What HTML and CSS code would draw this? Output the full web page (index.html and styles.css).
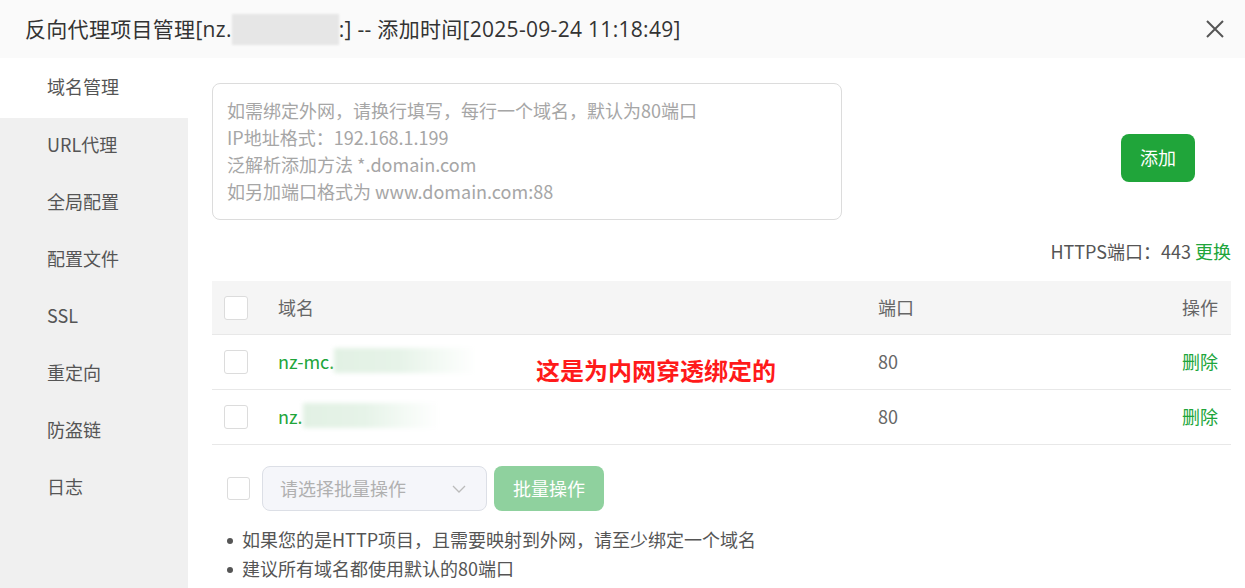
FILE: index.html
```html
<!DOCTYPE html>
<html lang="zh">
<head>
<meta charset="utf-8">
<title>反向代理项目管理</title>
<link rel="stylesheet" href="styles.css">
</head>
<body>
<div class="dialog">
  <div class="header">
    <div class="title">反向代理项目管理[nz.<span class="blur-gray"></span>:] -- 添加时间[2025-09-24 11:18:49]</div>
    <svg class="close" width="20" height="20" viewBox="0 0 20 20"><path d="M2 2 L18 18 M18 2 L2 18" stroke="#555" stroke-width="2" fill="none"/></svg>
  </div>
  <div class="body">
    <div class="sidebar">
      <div class="nav-item active">域名管理</div>
      <div class="nav-item">URL代理</div>
      <div class="nav-item">全局配置</div>
      <div class="nav-item">配置文件</div>
      <div class="nav-item">SSL</div>
      <div class="nav-item">重定向</div>
      <div class="nav-item">防盗链</div>
      <div class="nav-item">日志</div>
    </div>
    <div class="main">
      <div class="top-row">
        <div class="textarea">
          <div>如需绑定外网，请换行填写，每行一个域名，默认为80端口</div>
          <div>IP地址格式：192.168.1.199</div>
          <div>泛解析添加方法 *.domain.com</div>
          <div>如另加端口格式为 www.domain.com:88</div>
        </div>
        <div class="btn-add">添加</div>
      </div>
      <div class="https-row">HTTPS端口：443 <span class="link">更换</span></div>
      <div class="table">
        <div class="tr thead">
          <div class="cell"><span class="checkbox"></span></div>
          <div class="cell">域名</div>
          <div class="cell">端口</div>
          <div class="cell right">操作</div>
        </div>
        <div class="tr">
          <div class="cell"><span class="checkbox"></span></div>
          <div class="cell green">nz-mc.<span class="blur-green w143"></span></div>
          <div class="cell">80</div>
          <div class="cell right green">删除</div>
          <div class="annotation">这是为内网穿透绑定的</div>
        </div>
        <div class="tr">
          <div class="cell"><span class="checkbox"></span></div>
          <div class="cell green">nz.<span class="blur-green w137"></span></div>
          <div class="cell">80</div>
          <div class="cell right green">删除</div>
        </div>
      </div>
      <div class="bulk-row">
        <span class="checkbox"></span>
        <div class="select">
          <span>请选择批量操作</span>
          <svg width="14" height="8" viewBox="0 0 14 8"><path d="M1 1 L7 7 L13 1" stroke="#bbb" stroke-width="1.3" fill="none"/></svg>
        </div>
        <div class="btn-bulk">批量操作</div>
      </div>
      <ul class="tips">
        <li>如果您的是HTTP项目，且需要映射到外网，请至少绑定一个域名</li>
        <li>建议所有域名都使用默认的80端口</li>
      </ul>
    </div>
  </div>
</div>
</body>
</html>
```
FILE: styles.css
```css
* { box-sizing: border-box; }
html, body {
  margin: 0;
  padding: 0;
  background: #fff;
}
body {
  width: 1245px;
  height: 588px;
  overflow: hidden;
  font-family: "Noto Sans CJK SC", "Noto Sans", sans-serif;
  color: #555;
}
.dialog {
  width: 1245px;
  height: 588px;
  display: flex;
  flex-direction: column;
}
.header {
  height: 58px;
  flex: none;
  background: #fafafa;
  display: flex;
  align-items: center;
  justify-content: space-between;
  padding: 0 20px 0 25px;
}
.title {
  font-family: "Open Sans", "Noto Sans CJK SC", sans-serif;
  font-size: 21px;
  letter-spacing: 0.3px;
  color: #333;
  display: flex;
  align-items: center;
  white-space: nowrap;
  padding-bottom: 2px;
}
.blur-gray {
  display: inline-block;
  width: 107px;
  height: 31px;
  background: #e6e6e6;
  filter: blur(1px);
  margin-top: 2px;
}
.close { display: block; }
.body {
  flex: 1;
  display: flex;
}
.sidebar {
  width: 188px;
  flex: none;
  background: #f0f0f0;
}
.nav-item {
  height: 57px;
  padding-left: 47px;
  padding-bottom: 5px;
  display: flex;
  align-items: center;
  font-size: 18px;
  color: #555;
}
.nav-item.active {
  background: #fff;
  height: 60px;
  padding-bottom: 4px;
}
.main {
  flex: 1;
  padding: 25px 14px 0 24px;
}
.top-row {
  display: flex;
  justify-content: space-between;
  align-items: flex-start;
  padding-right: 36px;
}
.textarea {
  width: 630px;
  height: 137px;
  border: 1px solid #dcdcdc;
  border-radius: 8px;
  padding: 13px 14px;
  font-size: 18px;
  line-height: 27px;
  color: #a6a6a6;
}
.btn-add {
  margin-top: 51px;
  width: 74px;
  height: 48px;
  background: #20a53a;
  color: #fff;
  border-radius: 8px;
  font-size: 18px;
  display: flex;
  align-items: center;
  justify-content: center;
  padding-bottom: 2px;
}
.https-row {
  margin-top: 17px;
  height: 28px;
  line-height: 28px;
  text-align: right;
  font-size: 18px;
  color: #555;
  margin-bottom: 1px;
}
.link { color: #20a53a; }
.table {
  margin-top: 16px;
}
.tr {
  position: relative;
  display: grid;
  grid-template-columns: 54px 600px 1fr auto;
  align-items: center;
  height: 55px;
  padding: 0 13px 0 12px;
  border-bottom: 1px solid #e8e8e8;
  font-size: 18px;
  color: #666;
}
.thead {
  height: 54px;
  background: #f5f5f5;
}
.cell {
  display: flex;
  align-items: center;
  padding-bottom: 2px;
}
.cell:first-child { padding-bottom: 0; }
.cell.right { justify-content: flex-end; }
.green { color: #20a53a; }
.checkbox {
  display: inline-block;
  width: 24px;
  height: 24px;
  border: 1px solid #dcdcdc;
  border-radius: 3px;
  background: #fff;
}
.blur-green {
  display: inline-block;
  height: 25px;
  background: linear-gradient(90deg, #e2f1e4 0%, #e6f3e8 45%, #f4faf5 75%, #ffffff 100%);
  filter: blur(2px);
  margin-top: -2px;
}
.w143 { width: 143px; }
.w137 { width: 137px; }
.annotation {
  position: absolute;
  left: 324px;
  top: 21px;
  font-size: 24px;
  line-height: 28px;
  font-weight: bold;
  color: #ff1a1a;
  white-space: nowrap;
}
.bulk-row {
  margin-top: 21px;
  display: flex;
  align-items: center;
  padding-left: 15px;
}
.bulk-row .checkbox {
  width: 23px;
  height: 23px;
}
.select {
  margin-left: 12px;
  width: 225px;
  height: 45px;
  background: #f5f6fa;
  border: 1px solid #dcdfe6;
  border-radius: 8px;
  display: flex;
  align-items: center;
  justify-content: space-between;
  padding: 0 20px 2px 17px;
  font-size: 18px;
  color: #b0b0b0;
}
.select svg { margin-top: 2px; }
.btn-bulk {
  margin-left: 7px;
  width: 110px;
  height: 45px;
  border-radius: 8px;
  background: #8fd19e;
  color: #fff;
  font-size: 18px;
  display: flex;
  align-items: center;
  justify-content: center;
  padding-bottom: 2px;
}
.tips {
  list-style: none;
  margin: 14px 0 0 0;
  padding: 0 0 0 15px;
  font-size: 18px;
  line-height: 29px;
  color: #555;
}
.tips li {
  position: relative;
  padding-left: 15px;
}
.tips li::before {
  content: "";
  position: absolute;
  left: 0;
  top: 13px;
  width: 6px;
  height: 6px;
  border-radius: 50%;
  background: #555;
}
```
